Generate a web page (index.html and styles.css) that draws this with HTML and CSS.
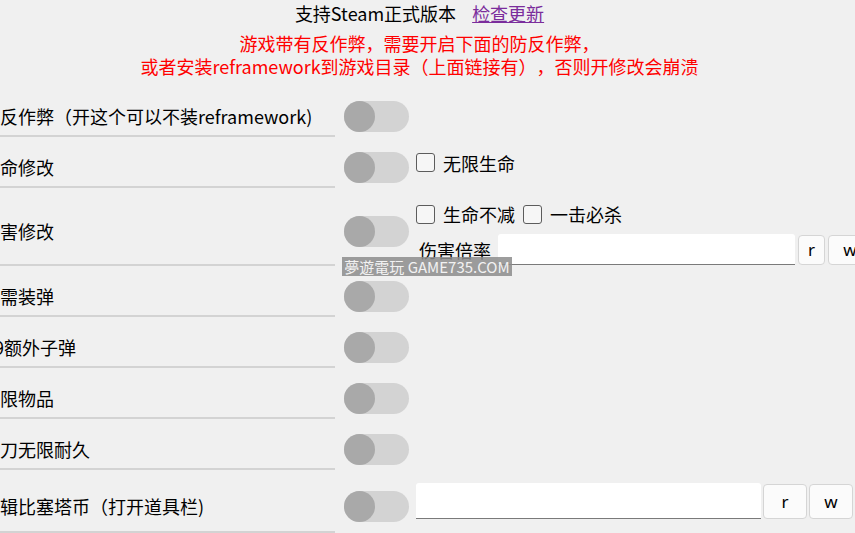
FILE: index.html
```html
<!DOCTYPE html>
<html lang="zh-CN">
<head>
    <meta charset="UTF-8">
    <meta name="viewport" content="width=device-width, initial-scale=1.0">
    <title>修改器</title>
    <link rel="stylesheet" href="styles.css">
</head>
<body>
    <div class="header">
        <p class="title">支持Steam正式版本<a href="#" class="update-link">检查更新</a></p>
        <p class="notice">游戏带有反作弊，需要开启下面的防反作弊，<br>或者安装reframework到游戏目录（上面链接有），否则开修改会崩溃</p>
    </div>

    <div class="list">
        <div class="row">
            <div class="label">反作弊（开这个可以不装reframework)</div>
            <span class="switch"></span>
        </div>
        <div class="row">
            <div class="label">命修改</div>
            <span class="switch"></span>
            <div class="extra">
                <label class="check"><span class="box"></span>无限生命</label>
            </div>
        </div>
        <div class="row">
            <div class="label">害修改</div>
            <span class="switch"></span>
            <div class="extra extra-stack">
                <div class="check-line">
                    <label class="check"><span class="box"></span>生命不减</label>
                    <label class="check"><span class="box"></span>一击必杀</label>
                </div>
                <div class="field-line">
                    <span class="field-name">伤害倍率</span>
                    <input type="text" class="field field-small">
                    <button class="btn btn-narrow">r</button>
                    <button class="btn">w</button>
                </div>
            </div>
        </div>
        <div class="row">
            <div class="label">需装弹</div>
            <span class="switch"></span>
        </div>
        <div class="row">
            <div class="label"><span class="cut">9</span>额外子弹</div>
            <span class="switch"></span>
        </div>
        <div class="row">
            <div class="label">限物品</div>
            <span class="switch"></span>
        </div>
        <div class="row">
            <div class="label">刀无限耐久</div>
            <span class="switch"></span>
        </div>
        <div class="row">
            <div class="label">辑比塞塔币（打开道具栏)</div>
            <span class="switch"></span>
            <div class="extra extra-money">
                <input type="text" class="field field-big">
                <button class="btn btn-big">r</button>
                <button class="btn btn-big">w</button>
            </div>
        </div>
    </div>

    <div class="watermark">夢遊電玩 GAME735.COM</div>
</body>
</html>
```

FILE: styles.css
```css
body {
    margin: 0;
    padding: 0;
    background-color: #f0f0f0;
    font-family: "Noto Sans CJK SC", "Noto Sans", sans-serif;
    font-size: 18px;
    color: #000;
    overflow: hidden;
    height: 533px;
    position: relative;
    text-spacing-trim: space-all;
}
.header {
    text-align: center;
    padding-right: 16px;
}
.title {
    margin: 0;
    padding-top: 1px;
    line-height: 24px;
}
.update-link {
    margin-left: 16px;
    color: #7b2d9c;
    text-decoration: underline;
}
.notice {
    margin: 7px 0 0;
    line-height: 23px;
    color: #ff0000;
}
.list {
    margin-top: 8px;
}
.row {
    display: flex;
    align-items: center;
    white-space: nowrap;
}
.label {
    flex: 0 0 335px;
    align-self: stretch;
    box-sizing: border-box;
    min-height: 51px;
    padding-top: 10px;
    display: flex;
    align-items: center;
    border-bottom: 2px solid #d3d3d3;
    overflow: hidden;
}
.cut {
    margin-left: -6px;
}

/* toggle, always off */
.switch {
    flex: 0 0 65px;
    height: 31px;
    margin-left: 9px;
    margin-top: 9px;
    border-radius: 16px;
    background-color: #d3d3d3;
    position: relative;
}
.switch::before {
    content: '';
    position: absolute;
    left: 0;
    top: 0;
    width: 31px;
    height: 31px;
    border-radius: 50%;
    background-color: #a9a9a9;
}

.extra {
    margin-left: 7px;
    display: flex;
    align-items: center;
}
.extra-stack {
    flex-direction: column;
    align-items: flex-start;
    padding: 14px 0 1px;
}
.check-line {
    display: flex;
    height: 24px;
    align-items: center;
}
.check {
    display: flex;
    align-items: center;
    margin-right: 8px;
    line-height: 24px;
}
.box {
    display: inline-block;
    width: 17px;
    height: 17px;
    border: 1px solid #5c5c5c;
    border-radius: 3px;
    background-color: #f6f6f6;
    margin-right: 8px;
}
.field-line {
    display: flex;
    align-items: center;
    margin-top: 8px;
}
.field-name {
    margin-left: 3px;
    margin-right: 7px;
}
.field {
    box-sizing: border-box;
    border: none;
    border-bottom: 1px solid #7a7a7a;
    background-color: #fff;
    border-radius: 3px 3px 0 0;
    font-size: 16px;
    padding: 0 8px;
}
.field-small {
    width: 297px;
    height: 31px;
}
.field-big {
    width: 345px;
    height: 36px;
}
.extra-money {
    margin-top: 13px;
    margin-bottom: 14px;
}
.btn {
    flex: 0 0 44px;
    box-sizing: border-box;
    height: 30px;
    margin-left: 3px;
    border: 1px solid #d5d5d5;
    border-radius: 4px;
    background-color: #fbfbfb;
    font-family: "Noto Sans", sans-serif;
    font-size: 17px;
    color: #000;
    padding: 0;
}
.btn-narrow {
    flex-basis: 27px;
}
.btn-big {
    height: 35px;
    margin-left: 2px;
}

.watermark {
    position: absolute;
    left: 342px;
    top: 257px;
    width: 170px;
    height: 19px;
    line-height: 19px;
    text-align: center;
    background-color: rgba(140, 140, 140, 0.85);
    color: #f2f2f2;
    font-family: "Noto Sans CJK TC", "Noto Sans", sans-serif;
    font-size: 15px;
    white-space: nowrap;
    overflow: hidden;
}
```
